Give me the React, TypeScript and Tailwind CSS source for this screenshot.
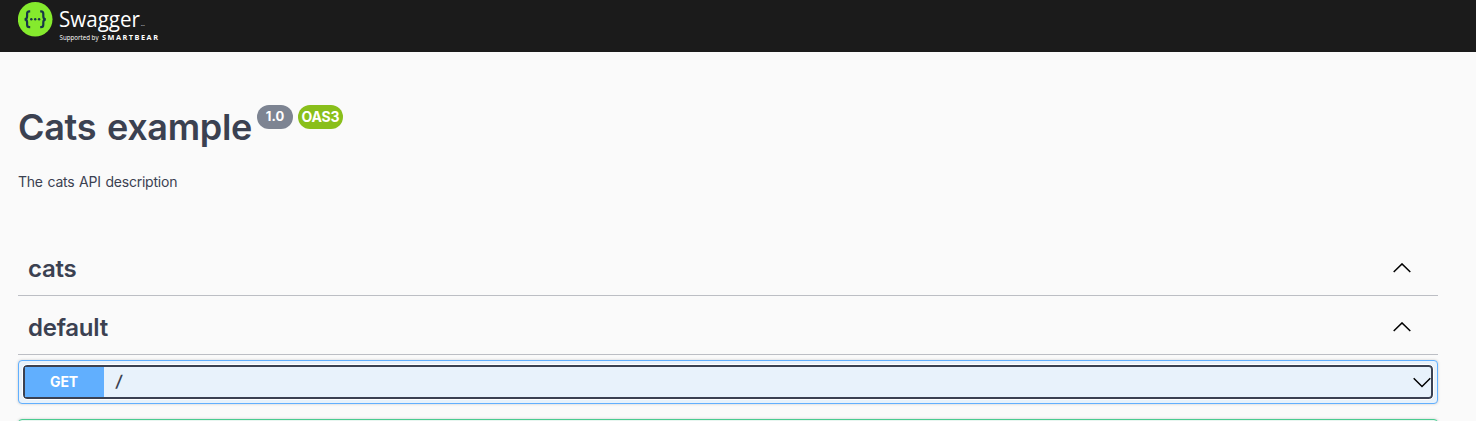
import React from "react";

function Logo() {
  return (
    <svg width="144" height="44" viewBox="0 0 144 44" className="block">
      <circle cx="17.2" cy="19.3" r="17.3" fill="#85ea2d" />
      <g fill="none" stroke="#173647" strokeWidth="2.200">
        <path d="M12.200 11.400h-.8c-1.700 0-2.300.9-2.300 2.400v2.500c0 1.800-.6 2.900-2.500 3 1.900.1 2.500 1.200 2.500 3v2.500c0 1.500.6 2.400 2.300 2.400h.8" />
        <path d="M22.200 11.400h.8c1.700 0 2.300.9 2.300 2.400v2.500c0 1.800.6 2.900 2.500 3-1.900.1-2.500 1.200-2.500 3v2.500c0 1.500-.6 2.400-2.300 2.400h-.8" />
      </g>
      <g fill="#173647">
        <circle cx="13.300" cy="19.300" r="1.200" />
        <circle cx="17.200" cy="19.300" r="1.200" />
        <circle cx="21.100" cy="19.300" r="1.200" />
      </g>
      <text x="41" y="26.500" fontSize="22.500" textLength="81" lengthAdjust="spacingAndGlyphs" className="fill-white font-['Open_Sans',sans-serif]">Swagger</text>
      <text x="123" y="26" fontSize="2.500" className="fill-white font-['Open_Sans',sans-serif]">TM</text>
      <text x="41.500" y="40.300" fontSize="6.200" textLength="39" className="fill-white font-['Open_Sans',sans-serif]">Supported by</text>
      <text x="84" y="40.300" fontSize="7.300" fontWeight="700" textLength="56" lengthAdjust="spacing" className="fill-white font-['Open_Sans',sans-serif]">SMARTBEAR</text>
    </svg>
  );
}

function Chevron({ down = false }: { down?: boolean }) {
  return (
    <svg width="20" height="12" viewBox="0 0 20 12" className="block" fill="none" stroke="#000" strokeWidth="1.500">
      <path d={down ? "M2.700 2.300 11 10.500 19.300 2.300" : "M1.700 9 10 .9 18.300 9"} />
    </svg>
  );
}

function Tag({ name }: { name: string }) {
  return (
    <h3 className="flex h-[54px] items-center justify-between border-b border-[#bcbec4] pr-[26px] pl-[10px] text-[24px] font-[580] tracking-[-0.25px]">
      <span>{name}</span>
      <Chevron />
    </h3>
  );
}

export default function App() {
  return (
    <div className="h-[421px] overflow-hidden bg-[#fafafa] font-[Inter,sans-serif] text-[#3b4151]">
      <header className="h-[52px] bg-[#1b1b1b] pl-[18px]">
        <Logo />
      </header>
      <main className="pr-[38px] pl-[18px]">
        <div className="flex h-[121px] items-start pt-[53px]">
          <h2 className="w-[239px] text-[36px] leading-[44px] font-[560] tracking-[-0.3px] [word-spacing:2px] whitespace-nowrap">Cats example</h2>
          <span className="flex h-6 w-9 items-center justify-center rounded-full bg-[#7d8492] pb-px text-[13px] font-bold text-white">1.0</span>
          <span className="ml-[5px] flex h-6 w-[45px] items-center justify-center rounded-full bg-[#89bf1b] pb-px text-[14px] font-bold tracking-[-0.2px] text-white">OAS3</span>
        </div>
        <p className="h-[69px] text-[14px] leading-[18px] tracking-[-0.23px] [word-spacing:1px]">The cats API description</p>
        <Tag name="cats" />
        <div className="h-[5px]" />
        <Tag name="default" />
        <div className="mt-[5px] h-[44px] rounded border border-[#61affe] bg-[#e8f2fb] p-1 shadow-[0_0_3px_rgba(0,0,0,0.19)]">
          <div className="flex h-[34px] items-center rounded-[4px] border-2 border-[#3b4151] outline outline-white">
            <span className="flex h-full w-[79px] items-center justify-center bg-[#61affe] pr-px pb-[2px] text-[14px] font-bold tracking-[-0.2px] text-white">GET</span>
            <span className="flex-1 pb-[2px] pl-[12px] text-[16px] font-semibold"><span className="inline-block -skew-x-8">/</span></span>
            <Chevron down />
          </div>
        </div>
        <div className="mt-[15px] h-[44px] rounded border border-[#49cc90] bg-[#e8f6f0] shadow-[0_0_3px_rgba(0,0,0,0.19)]" />
      </main>
    </div>
  );
}
